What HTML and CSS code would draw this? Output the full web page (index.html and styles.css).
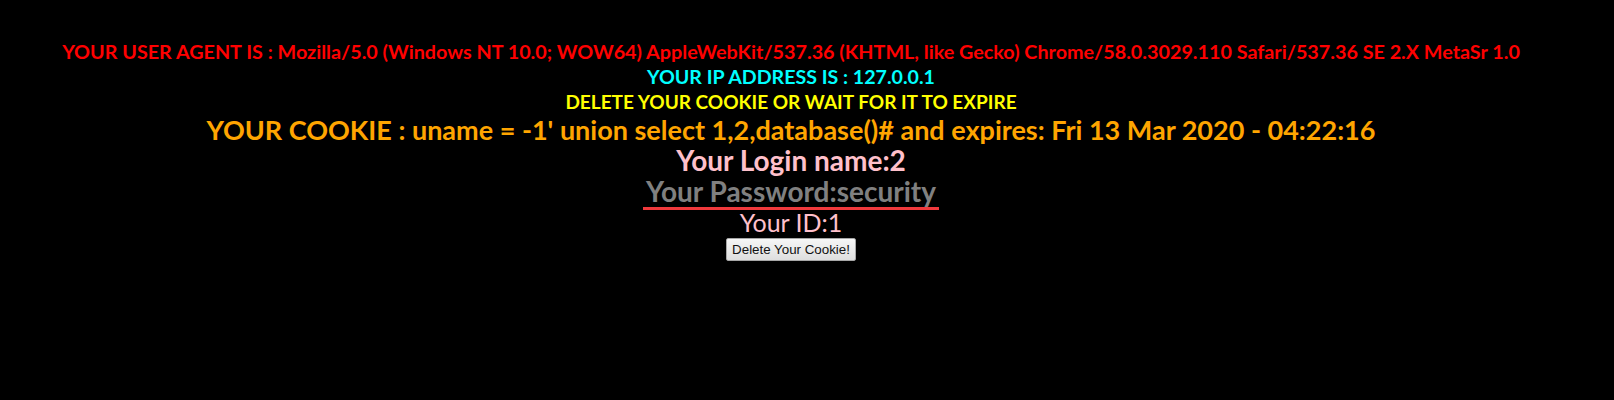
FILE: index.html
```html
<!DOCTYPE html>
<html>
<head>
<meta charset="utf-8">
<link rel="stylesheet" href="styles.css">
</head>
<body>
<div class="page">
  <div class="line small red">YOUR USER AGENT IS : Mozilla/5.0 (Windows NT 10.0; WOW64) AppleWebKit/537.36 (KHTML, like Gecko) Chrome/58.0.3029.110 Safari/537.36 SE 2.X MetaSr 1.0</div>
  <div class="line small cyan">YOUR IP ADDRESS IS : 127.0.0.1</div>
  <div class="line small yellow">DELETE YOUR COOKIE OR WAIT FOR IT TO EXPIRE</div>
  <div class="line big orange">YOUR COOKIE : uname = -1' union select 1,2,database()# and expires: Fri 13 Mar 2020 - 04:22:16</div>
  <div class="line big pink">Your Login name:2</div>
  <div class="line big grey"><span class="pw">Your Password:security</span></div>
  <div class="line id">Your ID:1</div>
  <form class="form">
    <button type="button" class="btn">Delete Your Cookie!</button>
  </form>
</div>
</body>
</html>
```
FILE: styles.css
```css
html, body {
  margin: 0;
  padding: 0;
  background: #000;
}
body {
  font-family: Lato, "Open Sans", sans-serif;
}
.page {
  width: 1582px;
  padding-top: 39px;
  text-align: center;
}
.line {
  white-space: nowrap;
}
.small {
  font-size: 19.6px;
  line-height: 25px;
  font-weight: 700;
}
.big {
  font-size: 28px;
  line-height: 31px;
  font-weight: 700;
}
.red { color: #ff0000; font-size: 19.75px; }
.cyan { color: #00ffff; }
.yellow { color: #ffff00; font-size: 19px; }
.orange { color: #ffa500; margin-top: 1px; font-size: 27px; line-height: 30px; }
.pink { color: #ffc0cb; }
.grey { color: #808080; }
.pw {
  display: inline-block;
  padding: 0 3px;
  border-bottom: 3px solid #f0393c;
}
.id {
  color: #ffc0cb;
  font-size: 25px;
  line-height: 24px;
  font-weight: 400;
}
.form {
  margin: 4px 0 0;
}
.btn {
  font-family: Arial, "Liberation Sans", sans-serif;
  font-size: 13.33px;
  color: #111;
  height: 23px;
  width: 130px;
  padding: 0;
  white-space: nowrap;
  background: linear-gradient(#f6f6f6, #dedede);
  border: 1px solid #a6a6a6;
  border-radius: 2px;
}
```
